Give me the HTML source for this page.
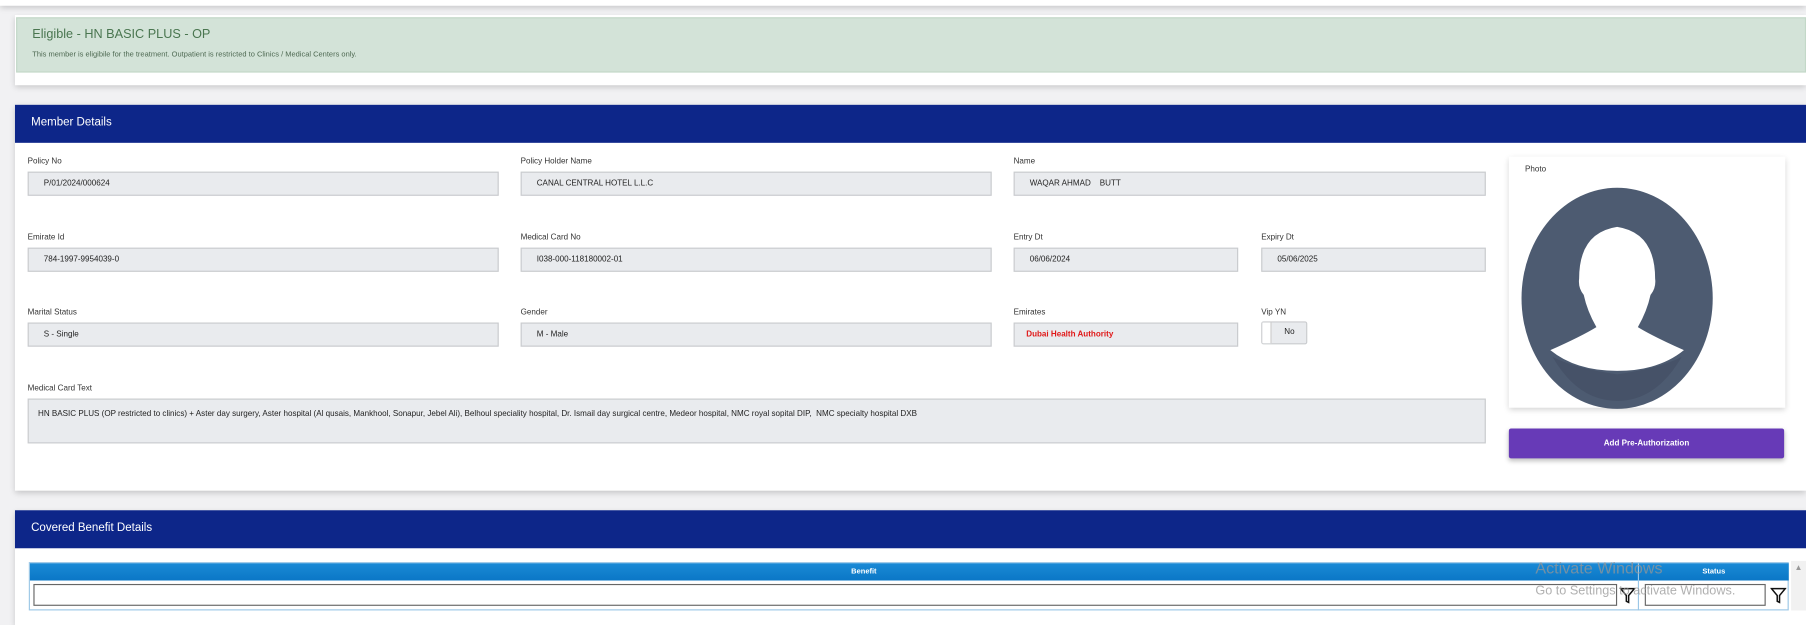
<!DOCTYPE html>
<html><head><style>
html,body{margin:0;padding:0;width:1806px;height:610px;overflow:hidden;background:#f1f1f3;font-family:"Liberation Sans",sans-serif;}
#w{position:absolute;left:0;top:0;width:1568px;height:530px;transform:scale(1.1518);transform-origin:0 0;}
.a{position:absolute;}
.card{position:absolute;background:#fff;box-shadow:0 2px 5px rgba(0,0,0,.18);}
.hdr{position:absolute;background:#0d2689;color:#fff;font-size:10px;}
.lbl{position:absolute;font-size:7px;color:#333;}
.inp{position:absolute;background:#e9ebee;border:1px solid #c9cbce;box-sizing:border-box;font-size:7px;color:#222;padding:0 0 0 13px;line-height:19px;}
</style></head><body><div id="w">
<div class="card" style="left:0;top:-10px;width:1568px;height:15px"></div>
<div class="card" style="left:13px;top:13px;width:1555px;height:61px"></div>
<div class="a" style="left:14px;top:15px;width:1554px;height:48px;background:#d3e3d8;border:1px solid #c3d8c8;box-sizing:border-box"></div>
<div class="a" style="left:28px;top:24px;font-size:11px;color:#4a7650">Eligible - HN BASIC PLUS - OP</div>
<div class="a" style="left:28px;top:44px;font-size:6.5px;color:#4f6a53">This member is eligibile for the treatment. Outpatient is restricted to Clinics / Medical Centers only.</div>

<div class="card" style="left:13px;top:91px;width:1555px;height:335px"></div>
<div class="hdr" style="left:13px;top:91px;width:1555px;height:33px;line-height:32px;padding-left:14px;box-sizing:border-box">Member Details</div>

<div class="lbl" style="left:24px;top:137px">Policy No</div>
<div class="inp" style="left:24px;top:149px;width:409px;height:21px">P/01/2024/000624</div>
<div class="lbl" style="left:452px;top:137px">Policy Holder Name</div>
<div class="inp" style="left:452px;top:149px;width:409px;height:21px">CANAL CENTRAL HOTEL L.L.C</div>
<div class="lbl" style="left:880px;top:137px">Name</div>
<div class="inp" style="left:880px;top:149px;width:410px;height:21px">WAQAR AHMAD &nbsp;&nbsp; BUTT</div>

<div class="lbl" style="left:24px;top:203px">Emirate Id</div>
<div class="inp" style="left:24px;top:215px;width:409px;height:21px">784-1997-9954039-0</div>
<div class="lbl" style="left:452px;top:203px">Medical Card No</div>
<div class="inp" style="left:452px;top:215px;width:409px;height:21px">I038-000-118180002-01</div>
<div class="lbl" style="left:880px;top:203px">Entry Dt</div>
<div class="inp" style="left:880px;top:215px;width:195px;height:21px">06/06/2024</div>
<div class="lbl" style="left:1095px;top:203px">Expiry Dt</div>
<div class="inp" style="left:1095px;top:215px;width:195px;height:21px">05/06/2025</div>

<div class="lbl" style="left:24px;top:268px">Marital Status</div>
<div class="inp" style="left:24px;top:280px;width:409px;height:21px">S - Single</div>
<div class="lbl" style="left:452px;top:268px">Gender</div>
<div class="inp" style="left:452px;top:280px;width:409px;height:21px">M - Male</div>
<div class="lbl" style="left:880px;top:268px">Emirates</div>
<div class="inp" style="left:880px;top:280px;width:195px;height:21px;color:#e01818;font-weight:bold;padding-left:10px">Dubai Health Authority</div>
<div class="lbl" style="left:1095px;top:268px">Vip YN</div>
<div class="inp" style="left:1095px;top:279px;width:40px;height:20px;padding-left:19px;line-height:17px;border-radius:2px">No</div>
<div class="a" style="left:1096px;top:280px;width:7px;height:18px;background:#fff;border-right:1px solid #ccc"></div>

<div class="lbl" style="left:24px;top:334px">Medical Card Text</div>
<div class="inp" style="left:24px;top:346px;width:1266px;height:39px;line-height:26px;padding-left:8px">HN BASIC PLUS (OP restricted to clinics) + Aster day surgery, Aster hospital (Al qusais, Mankhool, Sonapur, Jebel Ali), Belhoul speciality hospital, Dr. Ismail day surgical centre, Medeor hospital, NMC royal sopital DIP, &nbsp;NMC specialty hospital DXB</div>

<div class="card" style="left:1310px;top:136px;width:240px;height:218px"></div>
<div class="a" style="left:1324px;top:144px;font-size:7px;color:#333">Photo</div>
<svg class="a" style="left:1318px;top:160px" width="172" height="200" viewBox="0 0 172 200">
<ellipse cx="86" cy="99" rx="83" ry="96" fill="#4d5b71"/>
<path d="M30 150 Q50 160 86 165 Q122 160 142 150 Q120 188 86 188 Q52 188 30 150Z" fill="#465268"/>
<path d="M28 144 Q55 132 68 124 Q60 110 57 96 Q52 90 53 82 Q53 42 86 37 Q119 42 119 82 Q120 90 115 96 Q112 110 104 124 Q117 132 144 144 Q122 162 86 162 Q50 162 28 144Z" fill="#fff"/>
</svg>
<div class="a" style="left:1310px;top:372px;width:239px;height:26px;background:#673ab7;color:#fff;font-size:7px;font-weight:bold;text-align:center;line-height:27px;border-radius:2px;box-shadow:0 2px 4px rgba(0,0,0,.25)">Add Pre-Authorization</div>

<div class="card" style="left:13px;top:443px;width:1555px;height:100px"></div>
<div class="hdr" style="left:13px;top:443px;width:1555px;height:33px;line-height:32px;padding-left:14px;box-sizing:border-box">Covered Benefit Details</div>
<div class="a" style="left:25px;top:488px;width:1528px;height:42px;border:1px solid #9cc7e6;box-sizing:border-box"></div>
<div class="a" style="left:26px;top:489px;width:1527px;height:15px;background:linear-gradient(#1a8ad6,#0b77c6);color:#fff;font-size:6.5px;font-weight:bold;line-height:15px">
<span class="a" style="left:713px">Benefit</span><span class="a" style="left:1452px">Status</span></div>
<div class="a" style="left:1422px;top:489px;width:1px;height:41px;background:#9cc7e6"></div>
<div class="a" style="left:29px;top:507px;width:1375px;height:19px;border:1px solid #666;background:#fff;box-sizing:border-box"></div>
<div class="a" style="left:1428px;top:507px;width:105px;height:19px;border:1px solid #666;background:#fff;box-sizing:border-box"></div>
<svg class="a" style="left:1406px;top:510px" width="14" height="14" viewBox="0 0 14 14"><path d="M1 1H13L8 7V13L6 12V7Z" fill="none" stroke="#111" stroke-width="1.3"/></svg>
<svg class="a" style="left:1537px;top:510px" width="14" height="14" viewBox="0 0 14 14"><path d="M1 1H13L8 7V13L6 12V7Z" fill="none" stroke="#111" stroke-width="1.3"/></svg>
<div class="a" style="left:1555px;top:487px;width:13px;height:43px;background:#f1f1f1"></div>
<div class="a" style="left:1558px;top:490px;font-size:7px;color:#999">▲</div>
<div class="a" style="left:1333px;top:485px;font-size:14px;color:rgba(150,150,150,.75)">Activate Windows</div>
<div class="a" style="left:1333px;top:507px;font-size:11px;color:rgba(150,150,150,.75)">Go to Settings to activate Windows.</div>
</div></body></html>
